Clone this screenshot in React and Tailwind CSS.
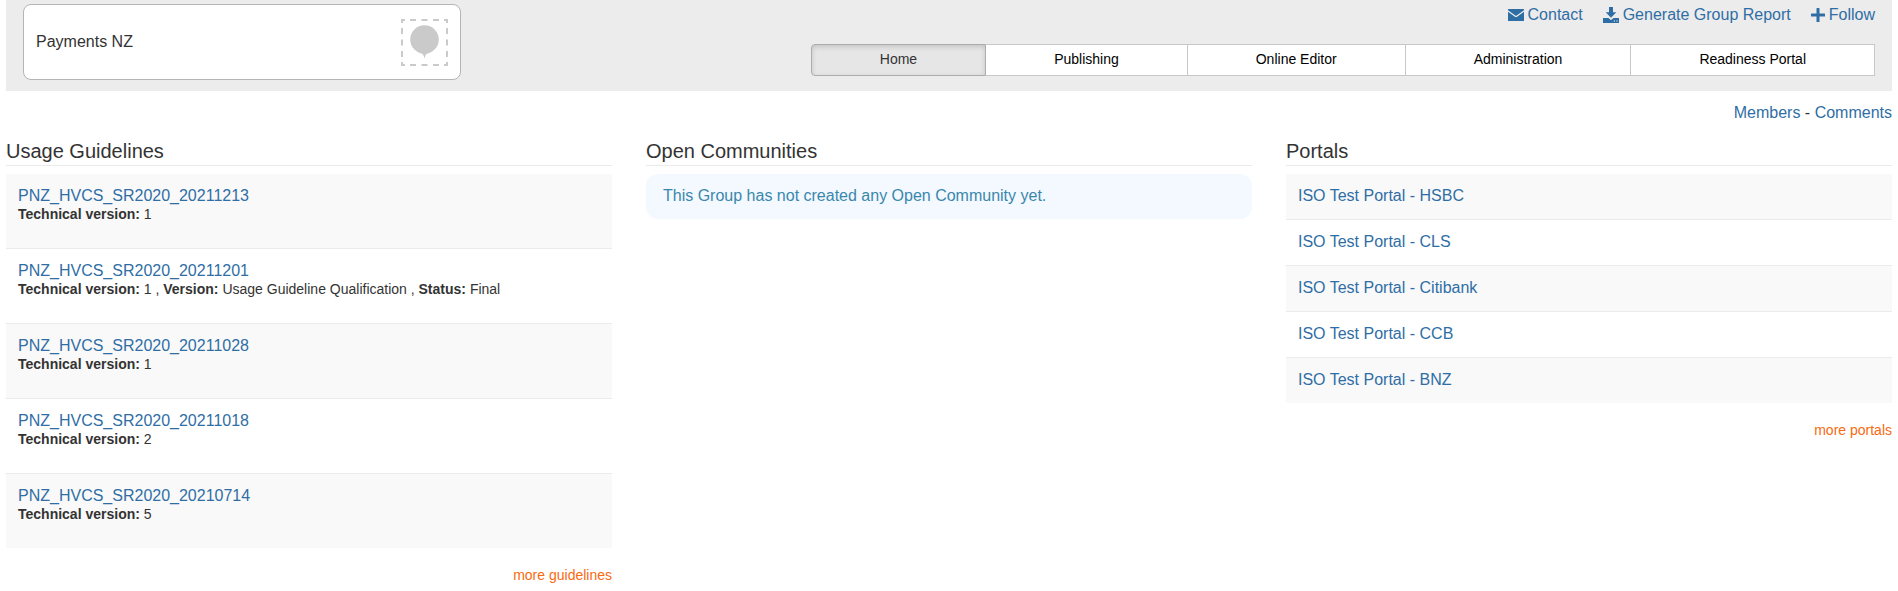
const guidelines = [
  { name: "PNZ_HVCS_SR2020_20211213", technical: "1" },
  {
    name: "PNZ_HVCS_SR2020_20211201",
    technical: "1",
    version: "Usage Guideline Qualification",
    status: "Final",
  },
  { name: "PNZ_HVCS_SR2020_20211028", technical: "1" },
  { name: "PNZ_HVCS_SR2020_20211018", technical: "2" },
  { name: "PNZ_HVCS_SR2020_20210714", technical: "5" },
];

const portals = ["HSBC", "CLS", "Citibank", "CCB", "BNZ"];

const tabs = ["Home", "Publishing", "Online Editor", "Administration", "Readiness Portal"];

function GroupLogo() {
  return (
    <svg className="size-[47px]" viewBox="0 0 47 47" aria-hidden="true">
      <g fill="none" stroke="#cacaca" strokeWidth="2">
        <path d="M1 4V1H4M43 1H46V4M46 43V46H43M4 46H1V43" />
        <path d="M9 1H15M20.500 1H26.500M32 1H38M9 46H15M20.500 46H26.500M32 46H38" />
        <path d="M1 9V15M1 20.500V26.500M1 32V38M46 9V15M46 20.500V26.500M46 32V38" />
      </g>
      <circle cx="23.500" cy="20.500" r="14.300" fill="#cacaca" />
      <path d="M19.500 33.500Q22.500 34.500 23.500 39.500Q24.500 34.500 27.500 33.500Z" fill="#cacaca" />
    </svg>
  );
}

function EnvelopeIcon() {
  return (
    <svg className="h-4 w-4" viewBox="0 0 16 16" fill="currentColor" aria-hidden="true">
      <path d="M0.300 2H15.700Q16 2 16 2.500V3.200L8.700 8.500Q8 9 7.300 8.500L0 3.200V2.500Q0 2 0.300 2Z" />
      <path d="M0 4.700L6.600 9.500Q8 10.500 9.400 9.500L16 4.700V13.400Q16 14 15.400 14H0.600Q0 14 0 13.400Z" />
    </svg>
  );
}

function DownloadIcon() {
  return (
    <svg className="h-4 w-4" viewBox="0 0 16 16" fill="currentColor" aria-hidden="true">
      <path d="M6 0H10V5.300H13.300L8 10.800L2.700 5.300H6Z" />
      <path
        fillRule="evenodd"
        d="M0 11H5.500L7.200 12.600Q8 13.300 8.800 12.600L10.500 11H16V16H0ZM10.800 13.500V14.500H12V13.500ZM13.400 13.500V14.500H14.600V13.500Z"
      />
    </svg>
  );
}

function PlusIcon() {
  return (
    <svg className="h-4 w-3.5" viewBox="0 0 14 16" fill="currentColor" aria-hidden="true">
      <path d="M5.500 1.500Q5.500 1 6 1H8Q8.500 1 8.500 1.500V6.500H13.500Q14 6.500 14 7V9Q14 9.500 13.500 9.500H8.500V14.500Q8.500 15 8 15H6Q5.500 15 5.500 14.500V9.500H0.500Q0 9.500 0 9V7Q0 6.500 0.500 6.500H5.500Z" />
    </svg>
  );
}

function ActionLink({ icon: Icon, children }) {
  return (
    <a href="#" className="flex items-center gap-1 text-[#2f6ea5]">
      <Icon />
      {children}
    </a>
  );
}

function Column({ title, children }) {
  return (
    <section>
      <h2 className="mb-2 border-b border-[#ebebeb] pb-0.5 text-xl leading-6">{title}</h2>
      {children}
    </section>
  );
}

function MoreLink({ children }) {
  return (
    <div className="mt-[17px] text-right text-sm">
      <a href="#" className="text-[#f96a10]">{children}</a>
    </div>
  );
}

export default function App() {
  return (
    <div className="bg-white px-1.5 font-['Liberation_Sans',Arial,sans-serif] text-base text-[#333333]">
      <header className="flex items-start justify-between bg-[#ececec] px-[17px] pt-1 pb-[11px]">
        <div className="flex h-[76px] w-[438px] items-center justify-between rounded-lg border border-[#b5b5b5] bg-white px-3">
          <h1>Payments NZ</h1>
          <GroupLogo />
        </div>
        <div className="flex flex-col items-end">
          <div className="flex gap-5 leading-[22px]">
            <ActionLink icon={EnvelopeIcon}>Contact</ActionLink>
            <ActionLink icon={DownloadIcon}>Generate Group Report</ActionLink>
            <ActionLink icon={PlusIcon}>Follow</ActionLink>
          </div>
          <nav className="mt-[18px] flex text-sm leading-7">
            {tabs.map((tab, i) => (
              <a
                key={tab}
                href="#"
                className={
                  i === 0
                    ? "rounded-l-sm border border-[#adadad] bg-[#e6e6e6] px-[68px] pb-0.5 shadow-[inset_0_2px_5px_rgba(0,0,0,0.15)]"
                    : "border-y border-r border-[#c8c8c8] bg-white px-[68px] pb-0.5 text-black"
                }
              >
                {tab}
              </a>
            ))}
          </nav>
        </div>
      </header>

      <div className="mt-2.5 text-right leading-6">
        <a href="#" className="text-[#2f6ea5]">Members</a> -{" "}
        <a href="#" className="text-[#2f6ea5]">Comments</a>
      </div>

      <main className="mt-3.5 grid grid-cols-3 gap-[34px]">
        <Column title="Usage Guidelines">
          <ul className="divide-y divide-[#ebebeb]">
            {guidelines.map((g) => (
              <li key={g.name} className="px-3 pt-3 pb-[25px] odd:bg-[#f9f9f9]">
                <a href="#" className="block leading-5 text-[#2f6ea5]">{g.name}</a>
                <p className="text-sm leading-[17px]">
                  <b>Technical version:</b> {g.technical}
                  {g.version && (
                    <>
                      {" "}, <b>Version:</b> {g.version} , <b>Status:</b> {g.status}
                    </>
                  )}
                </p>
              </li>
            ))}
          </ul>
          <MoreLink>more guidelines</MoreLink>
        </Column>

        <Column title="Open Communities">
          <p className="rounded-xl bg-[#f3f9fe] px-[17px] pt-3 pb-[13px] leading-5 text-[#3a87ad]">
            This Group has not created any Open Community yet.
          </p>
        </Column>

        <Column title="Portals">
          <ul className="divide-y divide-[#ebebeb]">
            {portals.map((p) => (
              <li key={p} className="px-3 pt-3 pb-[13px] leading-5 odd:bg-[#f9f9f9]">
                <a href="#" className="block text-[#2f6ea5]">ISO Test Portal - {p}</a>
              </li>
            ))}
          </ul>
          <MoreLink>more portals</MoreLink>
        </Column>
      </main>
    </div>
  );
}
